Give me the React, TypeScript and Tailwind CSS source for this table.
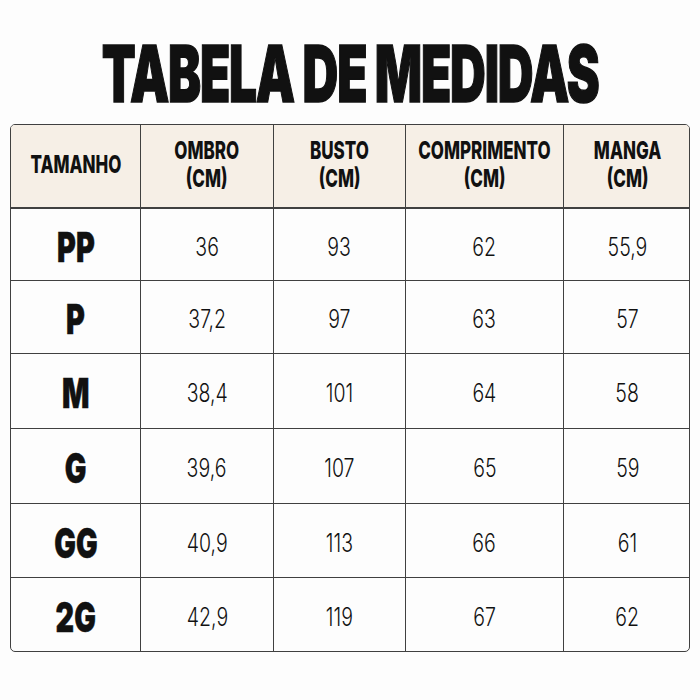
import React from 'react';

const headers = [
  { top: 'TAMANHO', bottom: '' },
  { top: 'OMBRO', bottom: '(CM)' },
  { top: 'BUSTO', bottom: '(CM)' },
  { top: 'COMPRIMENTO', bottom: '(CM)' },
  { top: 'MANGA', bottom: '(CM)' },
];

const rows = [
  { h: 'h-[71px]', cells: ['PP', '36', '93', '62', '55,9'] },
  { h: 'h-[73px]', cells: ['P', '37,2', '97', '63', '57'] },
  { h: 'h-[75px]', cells: ['M', '38,4', '101', '64', '58'] },
  { h: 'h-[75px]', cells: ['G', '39,6', '107', '65', '59'] },
  { h: 'h-[74px]', cells: ['GG', '40,9', '113', '66', '61'] },
  { h: 'h-[74px]', cells: ['2G', '42,9', '119', '67', '62'] },
];

const cols = 'grid grid-cols-[129px_133px_132px_158px_128px]';

const App = () => {
  return (
    <div className="w-[700px] h-[700px] bg-[#fdfdfd] font-['Inter',sans-serif] text-[#111]">
      <div className="h-[124px] pt-6 flex items-center justify-center">
        <h1 className="text-[78px] leading-none font-black tracking-tight scale-x-[0.635] whitespace-nowrap [-webkit-text-stroke:1.5px_#111]">
          TABELA DE MEDIDAS
        </h1>
      </div>

      <div className="mx-[10px] w-[680px] rounded-[5px] border-[1.5px] border-[#404040] overflow-hidden">
        {/* header */}
        <div className={`${cols} h-[84px] bg-[#f6efe6] border-b-2 border-[#404040]`}>
          {headers.map((h, i) => (
            <div
              key={i}
              className={`flex flex-col items-center justify-center pb-1 ${i > 0 ? 'border-l-[1.5px] border-[#404040]' : ''}`}
            >
              <span className="block text-[25px] leading-[28px] font-extrabold scale-x-[0.68] whitespace-nowrap">{h.top}</span>
              {h.bottom && (
                <span className="block text-[25px] leading-[28px] font-extrabold scale-x-[0.68]">{h.bottom}</span>
              )}
            </div>
          ))}
        </div>

        {/* body */}
        {rows.map((row, r) => (
          <div key={r} className={`${cols} ${row.h} ${r > 0 ? 'border-t-[1.5px] border-[#404040]' : ''}`}>
            {row.cells.map((cell, c) => (
              <div
                key={c}
                className={`flex items-center justify-center pt-[5px] ${c > 0 ? 'border-l-[1.5px] border-[#404040]' : ''}`}
              >
                {c === 0 ? (
                  <span className="text-[41px] leading-none font-black scale-x-[0.7] [-webkit-text-stroke:0.5px_#111]">{cell}</span>
                ) : (
                  <span className="text-[25px] leading-none font-light scale-x-[0.78]">{cell}</span>
                )}
              </div>
            ))}
          </div>
        ))}
      </div>
    </div>
  );
};

export default App;
